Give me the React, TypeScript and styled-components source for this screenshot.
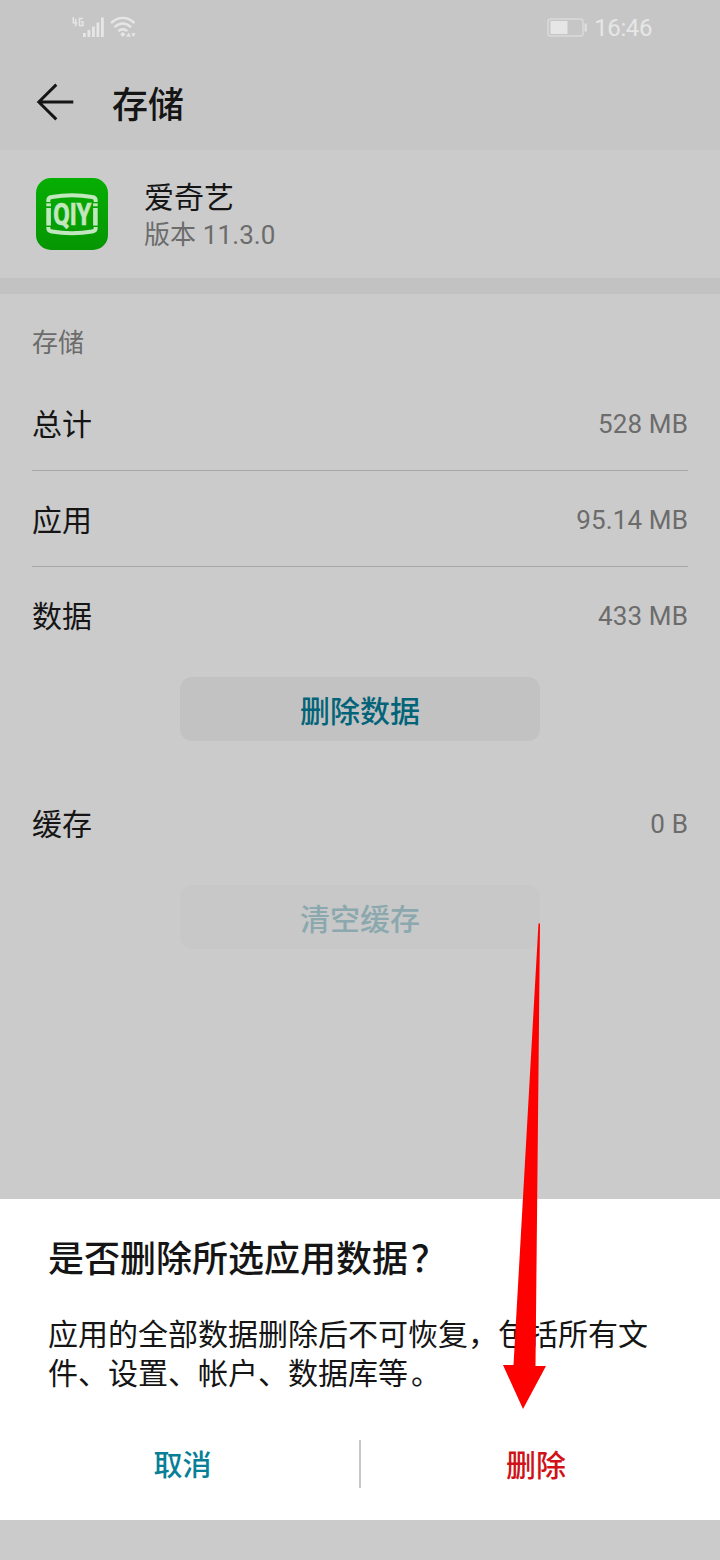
import React from 'react';
import styled, { createGlobalStyle } from 'styled-components';

const GlobalStyle = createGlobalStyle`
  *, *::before, *::after { box-sizing: border-box; }
  body {
    margin: 0;
    background: #cbcbcb;
    font-family: Roboto, "Noto Sans CJK SC", sans-serif;
    color: #151515;
  }
`;

const Screen = styled.div`
  position: relative;
  display: flex;
  flex-direction: column;
  width: 720px;
  height: 1560px;
  overflow: hidden;
  background: #cbcbcb;
`;

const TopArea = styled.div`
  height: 150px;
  background: #c6c6c6;
`;

const StatusBar = styled.div`
  display: flex;
  align-items: center;
  justify-content: space-between;
  height: 56px;
  padding: 0 68px 0 70px;
  color: #e6e6e6;
`;

const StatusGroup = styled.div`
  display: flex;
  align-items: center;
  gap: 7px;
`;

const Clock = styled.span`
  font-size: 24px;
  line-height: 28px;
  letter-spacing: -0.4px;
`;

const TitleBar = styled.header`
  display: flex;
  align-items: center;
  height: 92px;
  padding: 0 36px;
  gap: 38px;
`;

const Title = styled.h1`
  margin: 0;
  padding-top: 8px;
  font-size: 36px;
  line-height: 48px;
  font-weight: 500;
`;

const AppCard = styled.section`
  display: flex;
  align-items: center;
  gap: 36px;
  height: 128px;
  padding: 0 36px;
`;

const AppInfo = styled.div`
  padding-top: 2px;
`;

const AppName = styled.div`
  font-size: 30px;
  line-height: 40px;
`;

const AppVersion = styled.div`
  font-size: 26px;
  line-height: 35px;
  letter-spacing: 0.1px;
  color: #6c6c6c;
`;

const Band = styled.div`
  height: 16px;
  background: #c2c2c2;
`;

const StorageSection = styled.main`
  flex: 1;
  display: flex;
  flex-direction: column;
  padding: 0 32px;
`;

const SectionLabel = styled.h2`
  margin: 0;
  height: 81px;
  padding-top: 31px;
  font-size: 26px;
  line-height: 36px;
  font-weight: 400;
  color: #6c6c6c;
`;

const Row = styled.div<{ $divided?: boolean }>`
  display: flex;
  align-items: center;
  justify-content: space-between;
  height: 96px;
  border-bottom: 1px solid ${(p) => (p.$divided ? '#a6a6a6' : 'transparent')};
`;

const RowLabel = styled.span`
  padding-top: 4px;
  font-size: 30px;
  line-height: 40px;
`;

const RowValue = styled.span`
  padding-top: 2px;
  font-size: 26px;
  line-height: 36px;
  color: #6c6c6c;
  letter-spacing: 0.15px;
`;

const ActionButton = styled.button`
  width: 360px;
  height: 64px;
  margin: 14px auto 34px;
  padding: 6px 0 0;
  border: 0;
  border-radius: 12px;
  background: #c2c2c2;
  color: #036479;
  font: 500 30px/40px Roboto, "Noto Sans CJK SC", sans-serif;

  &:disabled {
    background: #c8c8c8;
    color: #8ba8ae;
  }
`;

const Dialog = styled.section`
  height: 321px;
  padding: 37px 48px 0;
  background: #fff;
`;

const DialogTitle = styled.h2`
  margin: 0;
  font-size: 36px;
  line-height: 48px;
  font-weight: 500;
  white-space: nowrap;
`;

const DialogText = styled.p`
  margin: 31px 0 0;
  font-size: 30px;
  line-height: 39px;
  width: 610px;
`;

const ClosingMark = styled.span`
  margin-left: 3px;
`;

const DialogActions = styled.div`
  display: flex;
  align-items: center;
  height: 48px;
  margin: 47px -48px 0;
`;

const DialogDivider = styled.span`
  width: 2px;
  height: 48px;
  background: #c9c9c9;
`;

const DialogButton = styled.button<{ $danger?: boolean }>`
  flex: none;
  width: 359px;
  height: 48px;
  padding: ${(p) => (p.$danger ? '4px 9px 0 0' : '4px 0 0 6px')};
  border: 0;
  background: none;
  color: ${(p) => (p.$danger ? '#d01218' : '#067f97')};
  font: 500 ${(p) => (p.$danger ? 30 : 29)}px/40px Roboto, "Noto Sans CJK SC", sans-serif;
`;

const NavigationBar = styled.div`
  height: 40px;
  background: #cbcbcb;
`;

const PointerArrow = styled.svg`
  position: absolute;
  left: 500px;
  top: 920px;
  pointer-events: none;
`;

const SignalIcon = () => (
  <svg width="68" height="26" viewBox="0 0 68 26" fill="none">
    <g stroke="#e6e6e6" strokeWidth="1.5">
      <path d="M3.300 2v5.700h4M5.700 4v7.200M12.800 3.400H9.500v7h3.400V7H11" />
    </g>
    <g fill="#e6e6e6">
      <rect x="13" y="18" width="2.800" height="4" />
      <rect x="17.500" y="15" width="2.800" height="7" />
      <rect x="22" y="11.500" width="2.800" height="10.500" />
      <rect x="26.500" y="7.500" width="2.800" height="14.500" />
      <rect x="31" y="2.500" width="2.800" height="19.500" />
    </g>
    <g stroke="#e6e6e6" strokeWidth="2.400">
      <path d="M41 8c7.500-6.600 16-6.600 23.500 0M44.500 12.200c5.300-4.600 11.300-4.600 16.600 0M48.300 16.200c3-2.500 6-2.500 9 0" />
    </g>
    <path d="M50.200 19.300 52.800 17l2.600 2.300-2.600 2.600zM56.200 21.700l2.300-4.200 2.300 4.200zM61.200 18.200h4.400l-2.200 3.800z" fill="#e6e6e6" />
  </svg>
);

const BatteryIcon = () => (
  <svg width="40" height="20" viewBox="0 0 40 20">
    <rect x="1" y="1" width="35" height="17" rx="2.500" fill="none" stroke="#dadada" strokeWidth="1.500" />
    <rect x="3.500" y="3" width="17" height="13" fill="#e6e6e6" />
    <rect x="37.500" y="5.500" width="2.300" height="8" fill="#e0e0e0" />
  </svg>
);

const BackIcon = () => (
  <svg width="38" height="38" viewBox="0 0 38 38" fill="none" stroke="#151515" strokeWidth="2.900">
    <path d="M37.300 19H2.800M20.300 1.600 2.800 19l17.500 17.400" />
  </svg>
);

const LogoLetters = styled.text`
  font-family: Roboto, sans-serif;
  font-weight: 700;
  font-size: 31px;
  stroke: #c2e6bd;
  stroke-width: 0.7px;
`;

const AppLogo = () => (
  <svg width="72" height="72" viewBox="0 0 72 72">
    <defs>
      <linearGradient id="logoFill" x1="0" y1="0" x2="0" y2="1">
        <stop offset="0" stopColor="#06ae03" />
        <stop offset="1" stopColor="#069602" />
      </linearGradient>
    </defs>
    <rect width="72" height="72" rx="15" fill="url(#logoFill)" />
    <g fill="none" stroke="#c2e6bd" strokeWidth="4">
      <path d="M12.300 24v-1.500q0-3 3.500-3.500Q36 15.500 56.200 19q3.500.5 3.500 3.500V24" />
      <path d="M12.300 49v1q0 3 3.500 3.500Q36 57 56.200 53.500q3.500-.5 3.500-3.500v-1" />
    </g>
    <g fill="#c2e6bd">
      <rect x="10.300" y="25.300" width="4.600" height="3" />
      <rect x="10.300" y="30" width="4.600" height="17.600" />
      <rect x="57.100" y="25.300" width="4.600" height="3" />
      <rect x="57.100" y="30" width="4.600" height="17.600" />
      <LogoLetters x="17.300" y="47" textLength="38" lengthAdjust="spacingAndGlyphs">QIY</LogoLetters>
    </g>
  </svg>
);

export default function App() {
  return (
    <Screen>
      <GlobalStyle />
      <TopArea>
        <StatusBar>
          <SignalIcon />
          <StatusGroup>
            <BatteryIcon />
            <Clock>16:46</Clock>
          </StatusGroup>
        </StatusBar>
        <TitleBar>
          <BackIcon />
          <Title>存储</Title>
        </TitleBar>
      </TopArea>
      <AppCard>
        <AppLogo />
        <AppInfo>
          <AppName>爱奇艺</AppName>
          <AppVersion>版本 11.3.0</AppVersion>
        </AppInfo>
      </AppCard>
      <Band />
      <StorageSection>
        <SectionLabel>存储</SectionLabel>
        <Row $divided>
          <RowLabel>总计</RowLabel>
          <RowValue>528 MB</RowValue>
        </Row>
        <Row $divided>
          <RowLabel>应用</RowLabel>
          <RowValue>95.14 MB</RowValue>
        </Row>
        <Row>
          <RowLabel>数据</RowLabel>
          <RowValue>433 MB</RowValue>
        </Row>
        <ActionButton>删除数据</ActionButton>
        <Row>
          <RowLabel>缓存</RowLabel>
          <RowValue>0 B</RowValue>
        </Row>
        <ActionButton disabled>清空缓存</ActionButton>
      </StorageSection>
      <Dialog role="dialog">
        <DialogTitle>
          是否删除所选应用数据<ClosingMark>？</ClosingMark>
        </DialogTitle>
        <DialogText>
          应用的全部数据删除后不可恢复，包括所有文件、设置、帐户、数据库等<ClosingMark>。</ClosingMark>
        </DialogText>
        <DialogActions>
          <DialogButton>取消</DialogButton>
          <DialogDivider />
          <DialogButton $danger>删除</DialogButton>
        </DialogActions>
      </Dialog>
      <NavigationBar />
      <PointerArrow width="50" height="492" viewBox="0 0 50 492">
        <path d="M38.500 3.500h1.500L35.500 446H46L23 489 3 445h10.500z" fill="#f00" />
      </PointerArrow>
    </Screen>
  );
}
